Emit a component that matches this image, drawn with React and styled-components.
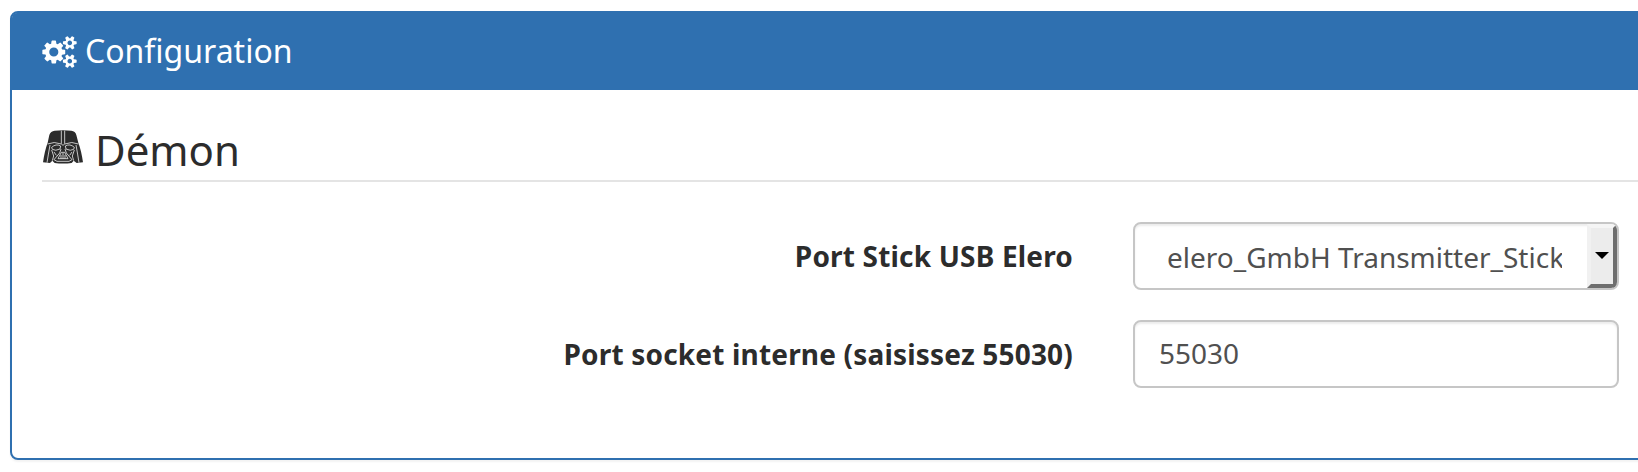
import React from "react";
import styled, { createGlobalStyle } from "styled-components";

const GlobalStyle = createGlobalStyle`
  *, *::before, *::after { box-sizing: border-box; }
  html { overflow: hidden; }
  body {
    margin: 0;
    background: #fff;
    color: #2c2c2c;
    font-family: "Noto Sans", "Open Sans", sans-serif;
    font-size: 28px;
    line-height: 40px;
    overflow: hidden;
  }
`;

const Page = styled.main`
  height: 472px;
  padding: 11px 0 0 10px;
  overflow: hidden;
`;

const Panel = styled.section`
  width: 1700px;
  height: 449px;
  border: 2px solid #2f70b0;
  border-radius: 8px;
  background: #fff;
  box-shadow: 0 2px 2px rgba(0, 0, 0, 0.05);
`;

const PanelHeading = styled.header`
  display: flex;
  align-items: center;
  height: 77px;
  padding: 0 30px 2px;
  border-radius: 5px 5px 0 0;
  background: #2f70b0;
  color: #fff;
`;

const PanelTitle = styled.h3`
  display: flex;
  align-items: center;
  gap: 8px;
  margin: 0;
  font-size: 32px;
  font-weight: 400;
  line-height: 36px;
`;

const PanelBody = styled.div`
  padding: 30px;
`;

const Legend = styled.h2`
  display: flex;
  align-items: center;
  gap: 11px;
  height: 62px;
  margin: 0 0 40px;
  border-bottom: 2px solid #e4e4e4;
  font-size: 42px;
  font-weight: 400;
  line-height: 60px;
`;

const CogsSvg = styled.svg`
  display: block;
  width: 35px;
  height: 32px;
  margin-top: 2px;
  fill: currentColor;
`;

const HelmetSvg = styled.svg`
  display: block;
  width: 42px;
  height: 34px;
  margin-top: -6px;
`;

const FormRow = styled.div`
  display: grid;
  grid-template-columns: 1031px 486px;
  column-gap: 60px;
  align-items: center;
  margin-bottom: 30px;
`;

const Label = styled.label`
  font-weight: 700;
  letter-spacing: 0.18px;
  text-align: right;
  white-space: nowrap;
`;

const Field = styled.div`
  display: flex;
  height: 68px;
  border: 2px solid #c6c6c6;
  border-radius: 8px;
  background: #fff;
  box-shadow: inset 0 2px 2px rgba(0, 0, 0, 0.075);
  color: #505050;
  overflow: hidden;
`;

const TextInput = styled.input`
  flex: 1;
  min-width: 0;
  padding: 0 24px 2px;
  border: 0;
  outline: 0;
  background: transparent;
  color: inherit;
  font: inherit;
`;

const SelectValue = styled.span`
  flex: none;
  width: 395px;
  margin: 1px 25px 0 32px;
  line-height: 64px;
  white-space: nowrap;
  overflow: hidden;
`;

const SelectArrow = styled.span`
  display: flex;
  flex: 1;
  align-items: center;
  justify-content: center;
  padding-bottom: 2px;
  border: 4px solid;
  border-color: #f5f5f5 #6e6e6e #6e6e6e #f1f1f1;
  background: #ececec;

  &::after {
    content: "";
    border: 7px solid transparent;
    border-top-color: #000;
    border-bottom: 0;
  }
`;

function CogsIcon() {
  return (
    <CogsSvg viewBox="0 0 1920 1792" aria-hidden="true">
      <path d="M896 896q0-106-75-181t-181-75-181 75-75 181 75 181 181 75 181-75 75-181zm768 512q0-52-38-90t-90-38-90 38-38 90q0 53 37.5 90.5t90.5 37.5 90.5-37.5 37.5-90.5zm0-1024q0-52-38-90t-90-38-90 38-38 90q0 53 37.5 90.5t90.5 37.5 90.5-37.5 37.5-90.5zm-384 421v185q0 10-7 19.5t-16 10.5l-155 24q-11 35-32 76 34 48 90 115 7 11 7 20 0 12-7 19-23 30-82.5 89.5t-78.5 59.5q-11 0-21-7l-115-90q-37 19-77 31-11 108-23 155-7 24-30 24h-186q-11 0-20-7.5t-10-17.5l-23-153q-34-10-75-31l-118 89q-7 7-20 7-11 0-21-8-144-133-144-160 0-9 7-19 10-14 41-53t47-61q-23-44-35-82l-152-24q-10-1-17-9.5t-7-19.5v-185q0-10 7-19.5t16-10.5l155-24q11-35 32-76-34-48-90-115-7-11-7-20 0-12 7-20 22-30 82-89t79-59q11 0 21 7l115 90q34-18 77-32 11-108 23-154 7-24 30-24h186q11 0 20 7.5t10 17.5l23 153q34 10 75 31l118-89q8-7 20-7 11 0 21 8 144 133 144 160 0 8-7 19-12 16-42 54t-45 60q23 48 34 82l152 23q10 2 17 10.5t7 19.5zm640 533v140q0 16-149 31-12 27-30 52 51 113 51 138 0 4-4 7-122 71-124 71-8 0-46-47t-52-68q-20 2-30 2t-30-2q-14 21-52 68t-46 47q-2 0-124-71-4-3-4-7 0-25 51-138-18-25-30-52-149-15-149-31v-140q0-16 149-31 13-29 30-52-51-113-51-138 0-4 4-7 4-2 35-20t59-34 30-16q8 0 46 46.5t52 67.5q20-2 30-2t30 2q51-71 92-112l6-2q4 0 124 70 4 3 4 7 0 25-51 138 17 23 30 52 149 15 149 31zm0-1024v140q0 16-149 31-12 27-30 52 51 113 51 138 0 4-4 7-122 71-124 71-8 0-46-47t-52-68q-20 2-30 2t-30-2q-14 21-52 68t-46 47q-2 0-124-71-4-3-4-7 0-25 51-138-18-25-30-52-149-15-149-31v-140q0-16 149-31 13-29 30-52-51-113-51-138 0-4 4-7 4-2 35-20t59-34 30-16q8 0 46 46.5t52 67.5q20-2 30-2t30 2q51-71 92-112l6-2q4 0 124 70 4 3 4 7 0 25-51 138 17 23 30 52 149 15 149 31z" />
    </CogsSvg>
  );
}

function HelmetIcon() {
  return (
    <HelmetSvg viewBox="0 0 126 102" aria-hidden="true">
      <path
        fill="#2c2c2c"
        d="M22 15Q26 3 38 2Q63-1 88 2Q100 3 103 15L109 38Q118 62 123 97L104 99L95 92L89 99Q63 102 38 99L31 92L24 99L3 97Q8 62 17 38Z"
      />
      <g fill="none" stroke="#fff" strokeWidth="2.2" strokeLinejoin="round">
        <path d="M58 2V41M68 2V41" />
        <path d="M17 42Q36 33 58 42L63 46L68 42Q90 33 109 42" />
        <path d="M24 45Q19 73 15 98M102 45Q107 73 111 98" />
        <path d="M29 52Q42 40 56 48L54 57Q40 64 31 58ZM97 52Q84 40 70 48L72 57Q86 64 95 58Z" />
        <path d="M29 60L35 78L31 92M97 60L91 78L95 92" />
        <path d="M57 57L53 69L36 89L45 94H81L90 89L73 69L69 57" />
        <path d="M58 67H68L78 86H48Z" />
        <path d="M57 75V86M63 69V86M69 75V86M36 66L43 76M90 66L83 76" />
      </g>
    </HelmetSvg>
  );
}

export default function App() {
  return (
    <>
      <GlobalStyle />
      <Page>
        <Panel>
          <PanelHeading>
            <PanelTitle>
              <CogsIcon />
              Configuration
            </PanelTitle>
          </PanelHeading>
          <PanelBody>
            <Legend>
              <HelmetIcon />
              Démon
            </Legend>
            <FormRow>
              <Label>Port Stick USB Elero</Label>
              <Field>
                <SelectValue>elero_GmbH Transmitter_Stick</SelectValue>
                <SelectArrow />
              </Field>
            </FormRow>
            <FormRow>
              <Label htmlFor="socket-port">Port socket interne (saisissez 55030)</Label>
              <Field>
                <TextInput id="socket-port" defaultValue="55030" />
              </Field>
            </FormRow>
          </PanelBody>
        </Panel>
      </Page>
    </>
  );
}
